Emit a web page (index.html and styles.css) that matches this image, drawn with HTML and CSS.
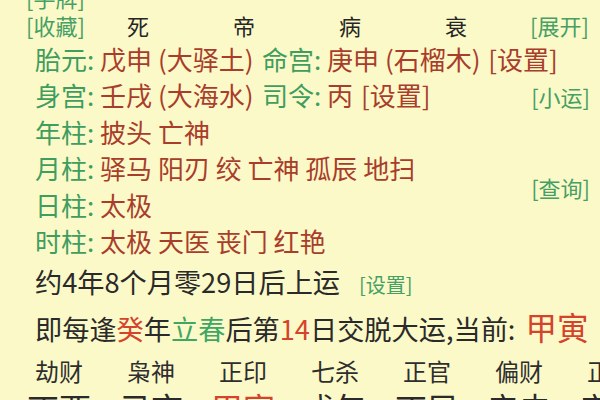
FILE: index.html
```html
<!DOCTYPE html>
<html lang="zh-CN">
<head>
<meta charset="utf-8">
<title>八字</title>
<link rel="stylesheet" href="styles.css">
</head>
<body>
<div class="page">
  <div class="cut"><span class="btn">[手牌]</span></div>
  <div class="header">
    <span class="btn head-btn">[收藏]</span>
    <span class="stage">死</span>
    <span class="stage">帝</span>
    <span class="stage">病</span>
    <span class="stage">衰</span>
    <span class="btn head-right">[展开]</span>
  </div>
  <div class="pillars">
    <div class="row full">
      <span class="seg"><span class="lbl">胎元:</span> <span class="val">戊申 (大驿土)</span></span><span class="lbl">命宫:</span> <span class="val">庚申 (石榴木)</span> <span class="val set">[设置]</span>
    </div>
    <div class="row">
      <span class="seg"><span class="lbl">身宫:</span> <span class="val">壬戌 (大海水)</span></span><span class="lbl">司令:</span> <span class="val">丙</span> <span class="val set">[设置]</span>
    </div>
    <div class="side btn">[小运]</div>
    <div class="row"><span class="lbl">年柱:</span> <span class="val">披头 亡神</span></div>
    <div class="row"><span class="lbl">月柱:</span> <span class="val">驿马 阳刃 绞 亡神 孤辰 地扫</span></div>
    <div class="side btn query">[查询]</div>
    <div class="row"><span class="lbl">日柱:</span> <span class="val">太极</span></div>
    <div class="row"><span class="lbl">时柱:</span> <span class="val">太极 天医 丧门 红艳</span></div>
  </div>
  <div class="line">约4年8个月零29日后上运<span class="btn small-set">[设置]</span></div>
  <div class="line">即每逢<span class="hot">癸</span>年<span class="green">立春</span>后第<span class="hot">14</span>日交脱大运,当前: <span class="hot big">甲寅</span></div>
  <div class="gods">
    <span class="god">劫财</span>
    <span class="god">枭神</span>
    <span class="god">正印</span>
    <span class="god">七杀</span>
    <span class="god">正官</span>
    <span class="god">偏财</span>
    <span class="god">正</span>
  </div>
  <div class="ganzhi">
    <span class="gz">丁酉</span>
    <span class="gz">己亥</span>
    <span class="gz red">甲寅</span>
    <span class="gz">戊午</span>
    <span class="gz">丁巳</span>
    <span class="gz">辛未</span>
    <span class="gz">辛</span>
  </div>
</div>
</body>
</html>
```

FILE: styles.css
```css
html, body {
  margin: 0;
  padding: 0;
  background: #fcf9c8;
  overflow: hidden;
}
body {
  width: 600px;
  height: 400px;
  font-family: "Noto Sans CJK SC", "Noto Sans", sans-serif;
  color: #2a2a2a;
}
.page {
  display: flex;
  flex-direction: column;
}
.btn {
  color: #45a065;
}
.cut {
  margin-top: -14px;
  height: 22px;
  line-height: 22px;
  font-size: 22px;
  padding-left: 26px;
}
.header {
  display: flex;
  align-items: center;
  height: 33px;
  font-size: 22px;
  padding-left: 26px;
}
.head-btn {
  width: 59px;
}
.stage {
  width: 106px;
  text-align: center;
  color: #262626;
}
.head-right {
  margin-left: 21px;
}
.pillars {
  display: grid;
  grid-template-columns: 1fr 60px;
  grid-auto-rows: 36.4px;
  padding: 0 10px 0 35px;
  font-size: 26px;
}
.row {
  grid-column: 1;
  line-height: 36.4px;
  white-space: nowrap;
}
.row.full {
  grid-column: 1 / -1;
}
.seg {
  display: inline-block;
  width: 227px;
}
.lbl {
  color: #3f9d60;
}
.val {
  color: #a93d2c;
}
.set {
  margin-left: 2px;
}
.side {
  grid-column: 2;
  font-size: 22px;
  align-self: center;
  text-align: right;
}
.query {
  grid-row: 4 / span 2;
}
.line {
  height: 45px;
  line-height: 45px;
  font-size: 27.2px;
  padding-left: 35px;
  white-space: nowrap;
}
.small-set {
  font-size: 20px;
  margin-left: 19px;
}
.hot {
  color: #d4432c;
}
.green {
  color: #3fa763;
}
.big {
  font-size: 31.5px;
  margin-left: 4px;
}
.gods {
  display: flex;
  height: 42px;
  align-items: center;
  padding-left: 35px;
  font-size: 24px;
  color: #2e2e2e;
  white-space: nowrap;
}
.god {
  flex: 0 0 92px;
}
.ganzhi {
  display: flex;
  height: 32px;
  line-height: 32px;
  padding-left: 27px;
  font-size: 32px;
  color: #2a2a2a;
  white-space: nowrap;
}
.gz {
  flex: 0 0 92px;
}
.gz.red {
  color: #d4432c;
}
```
